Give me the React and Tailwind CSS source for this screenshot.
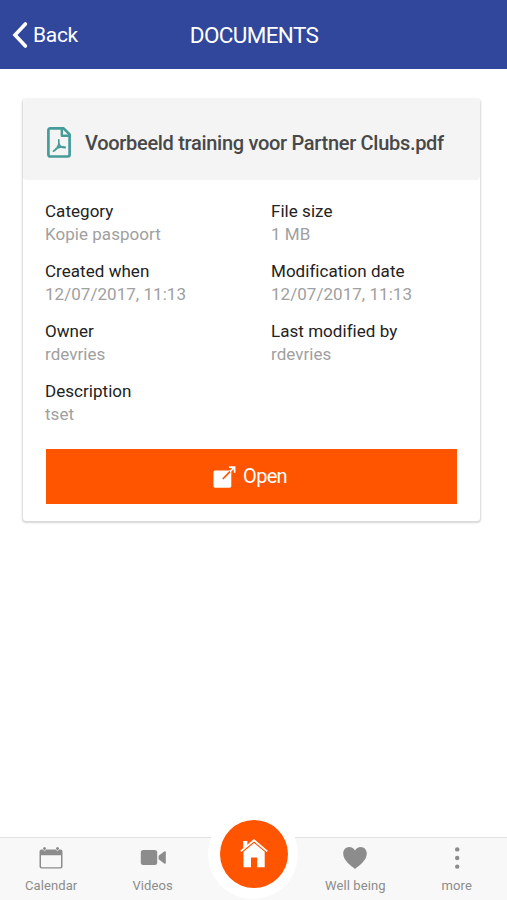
import React from 'react';

const details = [
    { label: 'Category', value: 'Kopie paspoort' },
    { label: 'File size', value: '1 MB' },
    { label: 'Created when', value: '12/07/2017, 11:13' },
    { label: 'Modification date', value: '12/07/2017, 11:13' },
    { label: 'Owner', value: 'rdevries' },
    { label: 'Last modified by', value: 'rdevries' },
    { label: 'Description', value: 'tset' }
];

const BackIcon = () => (
    <svg width="16" height="28" viewBox="0 0 16 28" fill="none" stroke="currentColor" strokeWidth="3.6" strokeLinecap="round">
        <path d="M13.4 3 3 14l10.4 11" strokeLinejoin="miter" />
    </svg>
);

const PdfIcon = () => (
    <svg width="24" height="31" viewBox="0 0 24 31" fill="none" stroke="#459c99" strokeLinejoin="round" strokeLinecap="round">
        <path d="M3.2 1.4H16.6L22.6 7.4V27.6Q22.6 29.5 20.7 29.5H3.3Q1.4 29.5 1.4 27.6V3.3Q1.4 1.4 3.3 1.4Z" strokeWidth="2.7" />
        <path d="M14.8 2V8.8H22" strokeWidth="2.4" />
        <path d="M11.8 12.8C11.4 15.2 11.9 17.6 13.2 19.2C14.6 20.4 16.4 20.8 18.2 20.6M11.9 17.2C11 20 9 22.8 6.4 24.2M9 21.4C11.4 20.2 14.6 19.4 18 20" strokeWidth="1.7" />
    </svg>
);

const OpenIcon = () => (
    <svg width="23" height="22" viewBox="0 0 23 22" fill="none">
        <rect x="0.5" y="4.5" width="17.8" height="17.2" rx="1.6" fill="white" />
        <path d="M9.8 13 18.2 4.4" stroke="#ff5400" strokeWidth="1.7" />
        <path d="M17 5.6 21.4 1.2M16 1.1H21.6V6.8" stroke="white" strokeWidth="1.7" />
    </svg>
);

const CalendarIcon = () => (
    <svg width="24" height="22" viewBox="0 0 24 22">
        <path d="M2.5 2.5H4V1.5A1.5 1.5 0 0 1 7 1.5V2.5H17V1.5A1.5 1.5 0 0 1 20 1.5V2.5H21.5A2 2 0 0 1 23.5 4.5V19.5A2 2 0 0 1 21.5 21.5H2.5A2 2 0 0 1 .5 19.5V4.5A2 2 0 0 1 2.5 2.5ZM2 8.2V19.2Q2 20.2 3 20.2H21Q22 20.2 22 19.2V8.2Z" fill="currentColor" fillRule="evenodd" />
        <path d="M4 2.4Q5.5 5 7 2.4M17 2.4Q18.5 5 20 2.4" fill="none" stroke="#f8f8f8" strokeWidth=".8" />
    </svg>
);

const VideoIcon = () => (
    <svg width="26" height="15" viewBox="0 0 26 15" fill="currentColor">
        <rect x="0.8" width="16.4" height="15" rx="2.5" />
        <path d="M18.6 5.7 24.2 1.6Q25.8.7 25.8 2.2V12.8Q25.8 14.3 24.2 13.4L18.6 9.3Z" />
    </svg>
);

const HomeIcon = () => (
    <svg width="28" height="29" viewBox="0 0 28 29" fill="white">
        <path d="M3.2 2H7.4V6.2L3.2 10Z" />
        <path d="M0.8 12.4 14 1.2 27.2 12.4" fill="none" stroke="white" strokeWidth="1.8" />
        <path d="M3.5 12.8 14 4 24.7 12.8V28.2H17.2V18.6H11V28.2H3.5Z" />
    </svg>
);

const HeartIcon = () => (
    <svg width="24" height="22" viewBox="0 0 24 22" fill="currentColor">
        <path d="M12 22C8 18.8.2 13.6.2 6.6C.2 2.8 3 0 6.3 0C8.7 0 10.9 1.3 12 3.4C13.1 1.3 15.3 0 17.7 0C21 0 23.8 2.8 23.8 6.6C23.8 13.6 16 18.8 12 22Z" />
    </svg>
);

const MoreIcon = () => (
    <svg width="7" height="22" viewBox="0 0 7 22" fill="currentColor">
        <circle cx="4.2" cy="2.4" r="2.2" />
        <circle cx="4.2" cy="11" r="2.2" />
        <circle cx="4.2" cy="19.6" r="2.2" />
    </svg>
);

const Tab = ({ icon, label }) => (
    <button className="flex flex-col items-center pl-px">
        <span className="h-[25px] mt-[7px] flex items-center justify-center">{icon}</span>
        <span className="mt-[7px] text-[13px] leading-[18px] tracking-[0.1px]">{label}</span>
    </button>
);

const App = () => {
    return (
        <div className="h-screen flex flex-col bg-white font-[Roboto,sans-serif]">
            <header className="h-[69px] shrink-0 grid grid-cols-[1fr_auto_1fr] items-center bg-[#30479c] text-white">
                <button className="flex items-center pl-3 pt-px gap-[5px] text-[21px] tracking-[-0.3px]">
                    <BackIcon />
                    <span className="pt-px">Back</span>
                </button>
                <h1 className="pt-[2px] pl-px text-[22.5px] tracking-[-0.65px]">DOCUMENTS</h1>
            </header>

            <main className="flex-1 pt-[30px] px-[23px]">
                <section className="w-[457px] h-[422px] rounded-[3px] bg-white shadow-[0_1px_2px_1px_rgba(0,0,0,0.16)]">
                    <div className="h-[81px] flex items-center pl-6 pt-[5px] gap-[14px] rounded bg-[#f4f4f4]">
                        <PdfIcon />
                        <h2 className="pt-px text-[20px] font-medium tracking-[-0.3px] text-[#484848] whitespace-nowrap">Voorbeeld training voor Partner Clubs.pdf</h2>
                    </div>

                    <dl className="grid grid-cols-[226px_1fr] gap-y-[14px] pl-[22px] pt-5">
                        {details.map((item) => (
                            <div key={item.label} className="text-[17px] leading-[23px] tracking-[0.04px]">
                                <dt className="text-[#222]">{item.label}</dt>
                                <dd className="text-[#a0a0a0]">{item.value}</dd>
                            </div>
                        ))}
                    </dl>

                    <button className="mt-[23px] ml-[23px] pr-[3px] w-[411px] h-[55px] flex items-center justify-center gap-[7px] bg-[#ff5400] text-white text-[20px] tracking-[-0.7px]">
                        <OpenIcon />
                        <span className="pb-[2px]">Open</span>
                    </button>
                </section>
            </main>

            <nav className="h-[63px] shrink-0 grid grid-cols-5 border-t border-[#e2e2e2] bg-[#f8f8f8] text-[#8c8c8c]">
                <Tab icon={<CalendarIcon />} label="Calendar" />
                <Tab icon={<VideoIcon />} label="Videos" />
                <div className="relative">
                    <button className="absolute left-1/2 -top-[29px] -translate-x-1/2 w-[90px] h-[90px] rounded-full bg-white flex items-center justify-center">
                        <span className="w-[68px] h-[68px] mb-px ml-px rounded-full bg-[#ff5400] flex items-center justify-center">
                            <HomeIcon />
                        </span>
                    </button>
                </div>
                <Tab icon={<HeartIcon />} label="Well being" />
                <Tab icon={<MoreIcon />} label="more" />
            </nav>
        </div>
    );
};

export default App;
